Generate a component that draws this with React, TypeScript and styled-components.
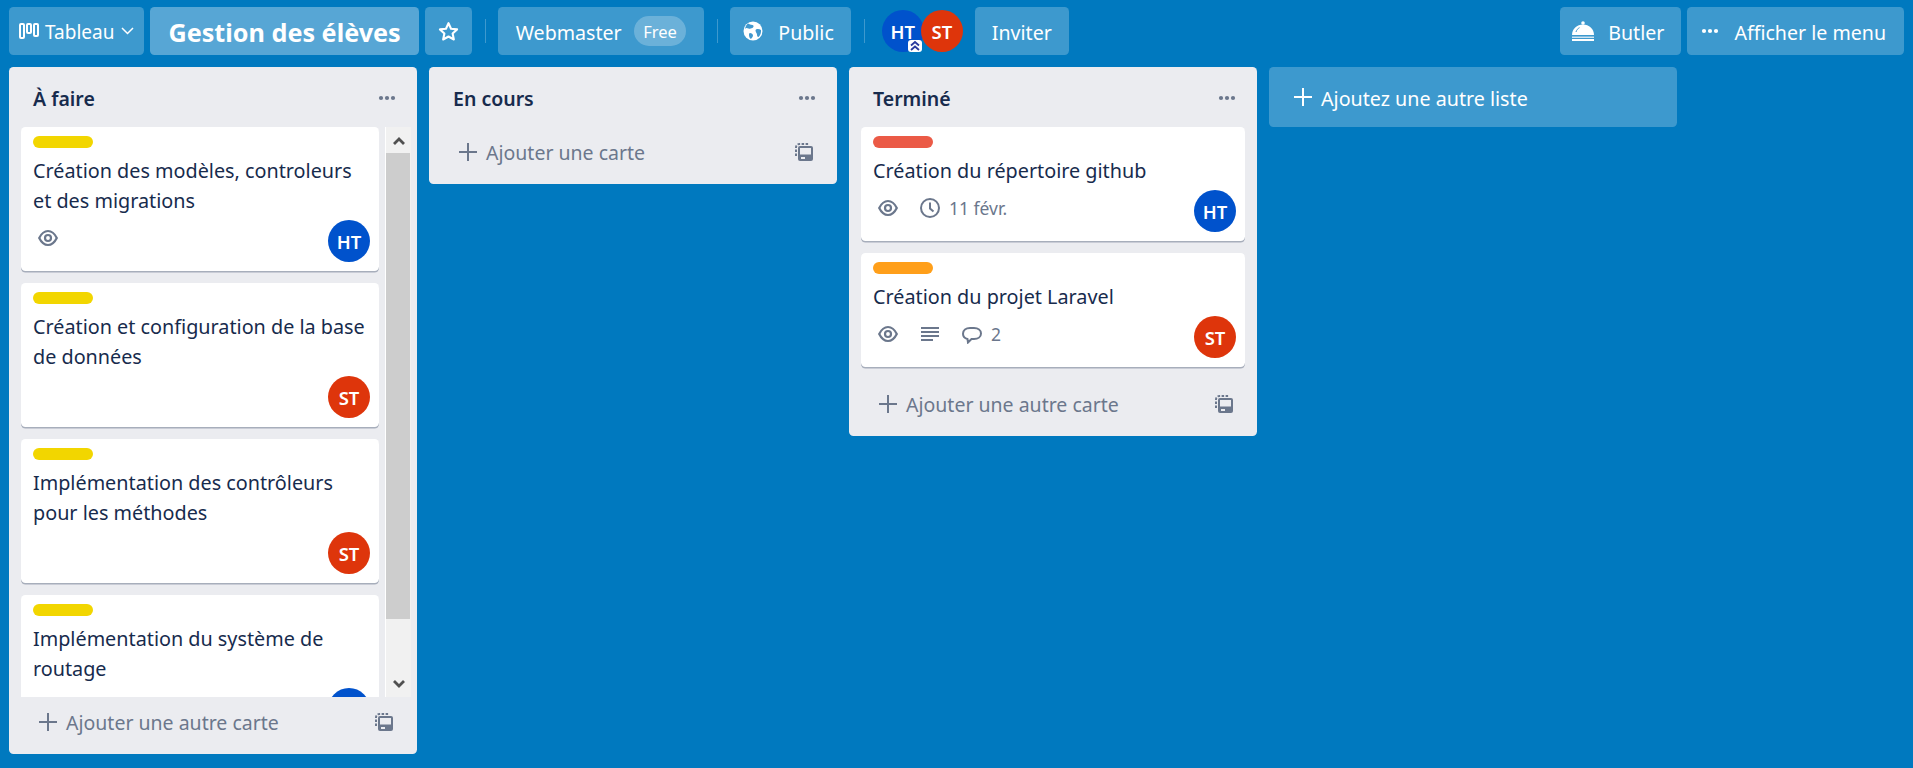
import React from 'react'
import styled, { createGlobalStyle } from 'styled-components'

const GlobalStyle = createGlobalStyle`
  html, body {
    margin: 0;
    height: 100%;
    background: #0079bf;
  }
  #root {
    height: 100%;
  }
  * {
    box-sizing: border-box;
  }
`

const Page = styled.div`
  height: 100vh;
  display: flex;
  flex-direction: column;
  overflow: hidden;
  background: #0079bf;
  font-family: 'Noto Sans', 'Open Sans', sans-serif;
  font-size: 20px;
  color: #172b4d;
`

const Header = styled.header`
  flex: none;
  display: flex;
  align-items: center;
  height: 48px;
  margin: 7px 3px 12px 9px;
`

const HeaderButton = styled.div<{ $gap?: number; $pad?: string }>`
  flex: none;
  display: flex;
  align-items: center;
  height: 48px;
  padding: ${({ $pad }) => $pad ?? '0 18px'};
  margin-right: 6px;
  gap: ${({ $gap }) => $gap ?? 0}px;
  border-radius: 4.5px;
  background: rgba(255, 255, 255, 0.24);
  color: #fff;
  font-size: 19.6px;
  white-space: nowrap;
`

const ButtonText = styled.span`
  margin-top: 2px;
`

const BoardSwitch = styled(HeaderButton)`
  padding: 0 10px;
  gap: 6px;
  font-size: 19px;
`

const BoardTitle = styled(HeaderButton)`
  background: rgba(255, 255, 255, 0.34);
  font-size: 25.2px;
  font-weight: 700;
`

const StarButton = styled(HeaderButton)`
  width: 47px;
  padding: 0;
  justify-content: center;
`

const Divider = styled.span`
  flex: none;
  width: 1px;
  height: 24px;
  margin: 0 12px 0 7px;
  background: rgba(255, 255, 255, 0.24);
`

const FreePill = styled.span`
  display: flex;
  align-items: center;
  height: 30px;
  padding: 0 9.5px;
  margin-left: 12px;
  border-radius: 15px;
  background: rgba(255, 255, 255, 0.24);
  font-size: 16.5px;
`

const Members = styled.div`
  flex: none;
  display: flex;
  margin: 0 12px 0 5px;
`

const Avatar = styled.div<{ $color: string }>`
  position: relative;
  flex: none;
  width: 42px;
  height: 42px;
  display: flex;
  align-items: center;
  justify-content: center;
  border-radius: 50%;
  background: ${({ $color }) => $color};
  color: #fff;
  font-size: 18.5px;
  font-weight: 600;

  & + & {
    margin-left: -3px;
  }
`

const AdminBadge = styled.span`
  position: absolute;
  right: 2px;
  bottom: 0;
  width: 14px;
  height: 12px;
  display: flex;
  background: #fff;
  border-radius: 3px;
`

const Spacer = styled.div`
  flex: 1;
`

const Board = styled.main`
  flex: 1;
  min-height: 0;
  display: flex;
  align-items: flex-start;
  gap: 12px;
  padding: 0 9px 14px;
`

const List = styled.section`
  flex: none;
  width: 408px;
  max-height: 100%;
  display: flex;
  flex-direction: column;
  border-radius: 4.5px;
  background: #ebecf0;
`

const ListHeader = styled.div`
  flex: none;
  height: 60px;
  display: flex;
  align-items: center;
  justify-content: space-between;
  padding: 2px 21px 0 24px;
  font-size: 19.5px;
  font-weight: 600;
  color: #172b4d;
`

const DotsIcon = styled.svg<{ $color: string }>`
  flex: none;
  width: 18px;
  height: 6px;
  fill: ${({ $color }) => $color};
`

const ListBody = styled.div<{ $scroll?: boolean }>`
  flex: 1;
  min-height: 0;
  display: flex;
  margin: ${({ $scroll }) => ($scroll ? '0 6px 0 12px' : '0 12px')};
`

const Cards = styled.div<{ $scroll?: boolean }>`
  flex: 1;
  min-width: 0;
  overflow: ${({ $scroll }) => ($scroll ? 'hidden' : 'visible')};
`

const Scrollbar = styled.div`
  flex: none;
  width: 25px;
  margin-left: 7px;
  display: flex;
  flex-direction: column;
  background: #f1f1f1;
  box-shadow: -1px 0 0 #fff;
`

const ScrollArrow = styled.div`
  flex: none;
  height: 26px;
  display: flex;
  align-items: center;
  justify-content: center;
`

const ScrollThumb = styled.div`
  flex: none;
  height: 466px;
  width: 24px;
  background: #cdcdcd;
`

const Card = styled.article<{ $wide?: boolean }>`
  width: ${({ $wide }) => ($wide ? '384px' : '358px')};
  padding: 9px 9px 9px 12px;
  margin-bottom: 12px;
  border-radius: 4.5px;
  background: #fff;
  box-shadow: 0 1.5px 0 rgba(9, 30, 66, 0.3);
`

const CardLabel = styled.div<{ $color: string }>`
  width: 60px;
  height: 12px;
  margin-bottom: 8px;
  border-radius: 6px;
  background: ${({ $color }) => $color};
`

const CardTitle = styled.div`
  font-size: 19.8px;
  line-height: 30px;
  color: #172b4d;
`

const CardFooter = styled.div`
  display: flex;
  justify-content: space-between;
  margin-top: 4px;
  min-height: 42px;
`

const Badges = styled.div`
  display: flex;
  align-items: center;
  height: 36px;
  padding-left: 5px;
  color: #6b778c;
  font-size: 17.5px;
`

const Badge = styled.span`
  display: flex;
  align-items: center;
  margin-right: 22px;
`

const BadgeText = styled.span`
  margin-left: 9px;
`

const BadgeIcon = styled.svg`
  flex: none;
  width: 20px;
  height: 20px;
  fill: none;
  stroke: #6b778c;
  stroke-width: 2;
`

const ListFooter = styled.div`
  flex: none;
  height: 57px;
  display: flex;
  align-items: center;
  padding: 0 24px 7px 30px;
  color: #6b778c;
  font-size: 19.5px;
`

const AddLabel = styled.span`
  flex: 1;
  margin-left: 9px;
`

const AddList = styled.div`
  flex: none;
  width: 408px;
  height: 60px;
  display: flex;
  align-items: center;
  gap: 9px;
  padding: 0 25px;
  border-radius: 4.5px;
  background: rgba(255, 255, 255, 0.24);
  color: #fff;
  font-size: 19.7px;
`

const PlusIcon = ({ color }: { color: string }) => (
  <svg width="18" height="18" viewBox="0 0 18 18" style={{ flex: 'none' }}>
    <path d="M9 0v18M0 9h18" stroke={color} strokeWidth="2" fill="none" />
  </svg>
)

const Dots = ({ color = '#6b778c' }: { color?: string }) => (
  <DotsIcon $color={color} viewBox="0 0 18 6">
    <circle cx="3" cy="3" r="2.1" />
    <circle cx="9" cy="3" r="2.1" />
    <circle cx="15" cy="3" r="2.1" />
  </DotsIcon>
)

const EyeIcon = () => (
  <BadgeIcon viewBox="0 0 20 20" style={{ strokeWidth: 2.2 }}>
    <path d="M1.2 10C3.400 5.600 6.300 3 10 3s6.600 2.600 8.800 7c-2.200 4.400-5.100 7-8.800 7s-6.600-2.600-8.800-7z" />
    <circle cx="10" cy="10" r="3" />
  </BadgeIcon>
)

const ClockIcon = () => (
  <BadgeIcon viewBox="0 0 20 20">
    <circle cx="10" cy="10" r="9" />
    <path d="M10 4.5v6l3.500 3" />
  </BadgeIcon>
)

const DescriptionIcon = () => (
  <BadgeIcon viewBox="0 0 20 20">
    <path d="M1 4h18M1 8h18M1 12h18M1 16h12" />
  </BadgeIcon>
)

const CommentIcon = () => (
  <BadgeIcon viewBox="0 0 20 20">
    <path d="M5.500 15C2.800 14.400 1 12.600 1 9.800 1 6.300 4 4 8 4h4c4 0 7 2.300 7 5.500 0 3.400-3 5.500-7 5.500H9.500l-3.500 3.500z" />
  </BadgeIcon>
)

const TemplateIcon = () => (
  <svg width="18" height="18" viewBox="0 0 18 18" style={{ flex: 'none' }}>
    <path
      d="M1 13V4.500C1 2.500 2.500 1 4.500 1H14"
      fill="none"
      stroke="#6b778c"
      strokeWidth="2"
      strokeDasharray="2.500 1.500"
    />
    <rect x="3" y="3" width="15" height="15" rx="2" fill="#6b778c" />
    <rect x="5" y="5" width="11" height="6.500" fill="#ebecf0" />
    <rect x="6" y="14" width="4" height="2" fill="#ebecf0" />
  </svg>
)

const BoardIcon = () => (
  <svg width="20" height="16" viewBox="0 0 20 16" style={{ flex: 'none' }}>
    <g fill="none" stroke="#fff" strokeWidth="2">
      <rect x="1" y="1" width="4" height="14" rx="1" />
      <rect x="8" y="1" width="4" height="9" rx="1" />
      <rect x="15" y="1" width="4" height="12" rx="1" />
    </g>
  </svg>
)

const ChevronIcon = () => (
  <svg width="13" height="8" viewBox="0 0 13 8" style={{ flex: 'none', marginLeft: 1 }}>
    <path d="M1 1l5.500 5.500L12 1" fill="none" stroke="#fff" strokeWidth="1.5" />
  </svg>
)

const StarIcon = () => (
  <svg width="21" height="21" viewBox="0 0 24 24" style={{ flex: 'none' }}>
    <path
      d="M12 2.500l2.900 6.300 6.900.8-5.100 4.700 1.400 6.800-6.100-3.400-6.100 3.400 1.400-6.800L2.200 9.600l6.900-.8z"
      fill="none"
      stroke="#fff"
      strokeWidth="2.4"
      strokeLinejoin="round"
    />
  </svg>
)

const GlobeIcon = () => (
  <svg width="20" height="20" viewBox="0 0 20 20" style={{ flex: 'none' }}>
    <circle cx="10" cy="10" r="9.5" fill="#fff" />
    <path
      d="M5 2.500c1.500.6 2.500 1.500 4.500 1.500 1 0 1.500 1.500.5 2.500S7 8 5.500 7.500 2.800 6.500 2 8c.3-2.200 1.500-4.300 3-5.500zM13 8.500c1.500-.8 3.500-.5 5 .5.300 2.500-.5 5-2.500 7-1 .2-1.500-1-1.500-2.500s-2.500-3.500-1-5zM7 12c1.500 0 3 1 3 2.500S8.500 17 8 18c-1.500-.5-2-3-2-4s0-2 1-2z"
      fill="#4098cf"
    />
  </svg>
)

const BellIcon = () => (
  <svg width="22" height="20" viewBox="0 0 22 20" style={{ flex: 'none' }}>
    <circle cx="11" cy="2" r="1.8" fill="#fff" />
    <path d="M0 14c0-6 5-10.500 11-10.500S22 8 22 14z" fill="#fff" />
    <path d="M4 11c.5-2 1.800-3.500 3.500-4.300" stroke="#4098cf" strokeWidth="1" fill="none" />
    <rect x="0" y="15.500" width="22" height="1.5" fill="#cfe5f3" />
    <rect x="0" y="18" width="22" height="2" fill="#fff" />
  </svg>
)

const AdminIcon = () => (
  <svg width="14" height="12" viewBox="0 0 14 12">
    <path d="M3 5.500L7 2l4 3.500M3 10L7 6.500l4 3.500" fill="none" stroke="#2a3a9e" strokeWidth="1.8" />
  </svg>
)

const ArrowIcon = ({ up }: { up?: boolean }) => (
  <svg width="12" height="9" viewBox="0 0 12 9">
    <path d={up ? 'M1 8l5-5 5 5' : 'M1 1l5 5 5-5'} fill="none" stroke="#505050" strokeWidth="2.8" />
  </svg>
)

type CardData = {
  label: string
  title: string
  member: 'HT' | 'ST'
  badges?: React.ReactNode
}

const memberColors = { HT: '#0052cc', ST: '#de350b' }
const YELLOW = '#f2d600'

const todoCards: CardData[] = [
  {
    label: YELLOW,
    title: 'Création des modèles, controleurs et des migrations',
    member: 'HT',
    badges: (
      <Badge>
        <EyeIcon />
      </Badge>
    ),
  },
  { label: YELLOW, title: 'Création et configuration de la base de données', member: 'ST' },
  { label: YELLOW, title: 'Implémentation des contrôleurs pour les méthodes', member: 'ST' },
  { label: YELLOW, title: 'Implémentation du système de routage', member: 'HT' },
]

const doneCards: CardData[] = [
  {
    label: '#eb5a46',
    title: 'Création du répertoire github',
    member: 'HT',
    badges: (
      <>
        <Badge>
          <EyeIcon />
        </Badge>
        <Badge>
          <ClockIcon />
          <BadgeText>11 févr.</BadgeText>
        </Badge>
      </>
    ),
  },
  {
    label: '#ff9f1a',
    title: 'Création du projet Laravel',
    member: 'ST',
    badges: (
      <>
        <Badge>
          <EyeIcon />
        </Badge>
        <Badge>
          <DescriptionIcon />
        </Badge>
        <Badge>
          <CommentIcon />
          <BadgeText>2</BadgeText>
        </Badge>
      </>
    ),
  },
]

const TaskCard = ({ card, wide }: { card: CardData; wide?: boolean }) => (
  <Card $wide={wide}>
    <CardLabel $color={card.label} />
    <CardTitle>{card.title}</CardTitle>
    <CardFooter>
      <Badges>{card.badges}</Badges>
      <Avatar $color={memberColors[card.member]}>{card.member}</Avatar>
    </CardFooter>
  </Card>
)

const Footer = ({ text }: { text: string }) => (
  <ListFooter>
    <PlusIcon color="#6b778c" />
    <AddLabel>{text}</AddLabel>
    <TemplateIcon />
  </ListFooter>
)

const App = () => (
  <Page>
    <GlobalStyle />
    <Header>
      <BoardSwitch>
        <BoardIcon />
        <ButtonText>Tableau</ButtonText>
        <ChevronIcon />
      </BoardSwitch>
      <BoardTitle>
        <ButtonText>Gestion des élèves</ButtonText>
      </BoardTitle>
      <StarButton>
        <StarIcon />
      </StarButton>
      <Divider />
      <HeaderButton>
        <ButtonText>Webmaster</ButtonText>
        <FreePill>Free</FreePill>
      </HeaderButton>
      <Divider />
      <HeaderButton $gap={15} $pad="0 17px 0 13px">
        <GlobeIcon />
        <ButtonText>Public</ButtonText>
      </HeaderButton>
      <Divider />
      <Members>
        <Avatar $color={memberColors.HT}>
          HT
          <AdminBadge>
            <AdminIcon />
          </AdminBadge>
        </Avatar>
        <Avatar $color={memberColors.ST}>ST</Avatar>
      </Members>
      <HeaderButton $pad="0 17px">
        <ButtonText>Inviter</ButtonText>
      </HeaderButton>
      <Spacer />
      <HeaderButton $gap={14} $pad="0 17px 0 12px">
        <BellIcon />
        <ButtonText>Butler</ButtonText>
      </HeaderButton>
      <HeaderButton $gap={15} $pad="0 18px 0 14px">
        <Dots color="#fff" />
        <ButtonText>Afficher le menu</ButtonText>
      </HeaderButton>
    </Header>
    <Board>
      <List>
        <ListHeader>
          À faire
          <Dots />
        </ListHeader>
        <ListBody $scroll>
          <Cards $scroll>
            {todoCards.map((card) => (
              <TaskCard key={card.title} card={card} />
            ))}
          </Cards>
          <Scrollbar>
            <ScrollArrow>
              <ArrowIcon up />
            </ScrollArrow>
            <ScrollThumb />
            <Spacer />
            <ScrollArrow>
              <ArrowIcon />
            </ScrollArrow>
          </Scrollbar>
        </ListBody>
        <Footer text="Ajouter une autre carte" />
      </List>
      <List>
        <ListHeader>
          En cours
          <Dots />
        </ListHeader>
        <Footer text="Ajouter une carte" />
      </List>
      <List>
        <ListHeader>
          Terminé
          <Dots />
        </ListHeader>
        <ListBody>
          <Cards>
            {doneCards.map((card) => (
              <TaskCard key={card.title} card={card} wide />
            ))}
          </Cards>
        </ListBody>
        <Footer text="Ajouter une autre carte" />
      </List>
      <AddList>
        <PlusIcon color="#fff" />
        <ButtonText>Ajoutez une autre liste</ButtonText>
      </AddList>
    </Board>
  </Page>
)

export default App
